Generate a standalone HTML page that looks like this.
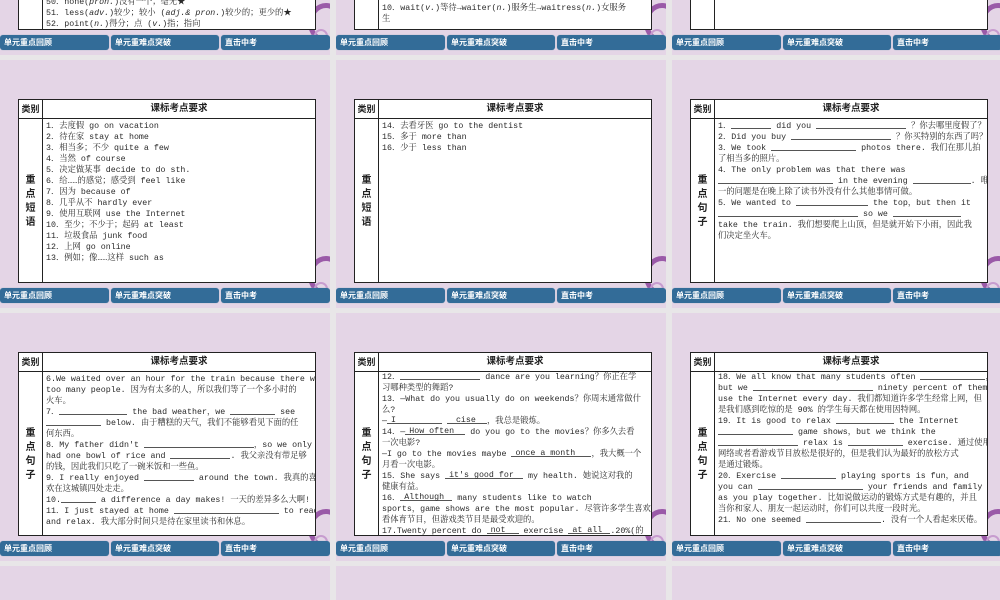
<!DOCTYPE html>
<html style="overflow:hidden;height:600px"><head><meta charset="utf-8"><style>
html,body{overflow:hidden}
body{margin:0;width:1000px;height:600px;background:#e8e6e8;position:relative;font-family:"Liberation Mono","Noto Serif CJK SC",monospace;}
.s{position:absolute;width:330px;height:248px;background:#e4d5e6;overflow:hidden}
.ring{position:absolute;right:-14px;top:196px;width:26px;height:30px;border:5px solid #9a5aa8;border-radius:50%}
.ring2{position:absolute;right:2px;top:222px;width:10px;height:10px;border:2px solid #c79ccf;border-radius:50%}
.t{position:absolute;left:18px;top:39px;width:296px;height:182px;background:#fff;border:1.3px solid #222;overflow:hidden}
.h{position:absolute;left:0;top:0;right:0;height:18px;border-bottom:1px solid #222;font:bold 9px "Liberation Sans","Noto Sans CJK SC",sans-serif;color:#222}
.h .a{position:absolute;left:0;top:0;width:23px;height:18px;line-height:18px;text-align:center;border-right:1px solid #222}
.h .b{position:absolute;left:24px;right:0;top:0;line-height:18px;text-align:center;font-size:9.5px}
.vl{position:absolute;left:23px;top:18px;bottom:0;border-left:1px solid #222}
.vc{position:absolute;left:0;width:23px;top:0;bottom:0;display:flex;flex-direction:column;justify-content:center;align-items:center;font:bold 10px/14px "Noto Sans CJK SC",sans-serif;color:#222}
.c{position:absolute;left:27px;top:21px;font-size:8.3px;line-height:11px;color:#2a2a2a;white-space:nowrap}
.c div{white-space:nowrap;height:11px}
.u{display:inline-block;border-bottom:1px solid #555;height:1px;line-height:1px;vertical-align:-1px;overflow:visible;position:relative}
.u b{position:absolute;left:4px;bottom:-2px;font-weight:normal;line-height:9px}
.nav{position:absolute;top:228px;left:0;width:330px;height:16px}
.nav div{position:absolute;top:0;height:15px;background:#336c98;border-radius:3px;color:#fff;font:bold 8px/15px "Noto Sans CJK SC",sans-serif;padding-left:4px;box-sizing:border-box;box-shadow:0 0 1px #8ab}
</style></head><body>

<!-- Row 1 -->
<div class="s" style="left:0;top:-193px"><div class="ring"></div><div class="ring2"></div>
<div class="t"><div class="vl" style="top:0"></div>
<div class="c" style="top:150px"><div>50．none(<i>pron.</i>)没有一个；毫无★</div><div>51．less(<i>adv.</i>)较少；较小 (<i>adj.&amp; pron.</i>)较少的；更少的★</div><div>52．point(<i>n.</i>)得分；点 (<i>v.</i>)指；指向</div></div></div>
<div class="nav"><div style="left:0;width:109px">单元重点回顾</div><div style="left:111px;width:108px">单元重难点突破</div><div style="left:221px;width:109px">直击中考</div></div></div>
<div class="s" style="left:336px;top:-193px"><div class="ring"></div><div class="ring2"></div>
<div class="t"><div class="vl" style="top:0"></div>
<div class="c" style="top:156px"><div>10．wait(<i>v.</i>)等待→waiter(<i>n.</i>)服务生→waitress(<i>n.</i>)女服务</div><div>生</div></div></div>
<div class="nav"><div style="left:0;width:109px">单元重点回顾</div><div style="left:111px;width:108px">单元重难点突破</div><div style="left:221px;width:109px">直击中考</div></div></div>
<div class="s" style="left:672px;top:-193px"><div class="ring"></div><div class="ring2"></div>
<div class="t"><div class="vl" style="top:0"></div></div>
<div class="nav"><div style="left:0;width:109px">单元重点回顾</div><div style="left:111px;width:108px">单元重难点突破</div><div style="left:221px;width:109px">直击中考</div></div></div>

<!-- Row 2 -->
<div class="s" style="left:0;top:60px"><div class="ring"></div><div class="ring2"></div>
<div class="t"><div class="h"><div class="a">类别</div><div class="b">课标考点要求</div></div><div class="vl"></div>
<div class="vc" style="top:18px">重<br>点<br>短<br>语</div>
<div class="c"><div>1．去度假 go on vacation</div><div>2．待在家 stay at home</div><div>3．相当多；不少 quite a few</div><div>4．当然 of course</div><div>5．决定做某事 decide to do sth.</div><div>6．给……的感觉；感受到 feel like</div><div>7．因为 because of</div><div>8．几乎从不 hardly ever</div><div>9．使用互联网 use the Internet</div><div>10．至少；不少于；起码 at least</div><div>11．垃圾食品 junk food</div><div>12．上网 go online</div><div>13．例如；像……这样 such as</div></div></div>
<div class="nav"><div style="left:0;width:109px">单元重点回顾</div><div style="left:111px;width:108px">单元重难点突破</div><div style="left:221px;width:109px">直击中考</div></div></div>

<div class="s" style="left:336px;top:60px"><div class="ring"></div><div class="ring2"></div>
<div class="t"><div class="h"><div class="a">类别</div><div class="b">课标考点要求</div></div><div class="vl"></div>
<div class="vc" style="top:18px">重<br>点<br>短<br>语</div>
<div class="c"><div>14．去看牙医 go to the dentist</div><div>15．多于 more than</div><div>16．少于 less than</div></div></div>
<div class="nav"><div style="left:0;width:109px">单元重点回顾</div><div style="left:111px;width:108px">单元重难点突破</div><div style="left:221px;width:109px">直击中考</div></div></div>

<div class="s" style="left:672px;top:60px"><div class="ring"></div><div class="ring2"></div>
<div class="t"><div class="h"><div class="a">类别</div><div class="b">课标考点要求</div></div><div class="vl"></div>
<div class="vc" style="top:18px">重<br>点<br>句<br>子</div>
<div class="c"><div>1．<span class="u" style="width:40px"></span> did you <span class="u" style="width:90px"></span> ？你去哪里度假了？</div><div>2．Did you buy <span class="u" style="width:100px"></span> ？你买特别的东西了吗？</div><div>3．We took <span class="u" style="width:85px"></span> photos there. 我们在那儿拍</div><div>了相当多的照片。</div><div>4．The only problem was that there was</div><div><span class="u" style="width:115px"></span> in the evening <span class="u" style="width:58px"></span>. 唯</div><div>一的问题是在晚上除了读书外没有什么其他事情可做。</div><div>5．We wanted to <span class="u" style="width:72px"></span> the top，but then it</div><div><span class="u" style="width:140px"></span> so we <span class="u" style="width:68px"></span></div><div>take the train. 我们想要爬上山顶，但是就开始下小雨，因此我</div><div>们决定坐火车。</div></div></div>
<div class="nav"><div style="left:0;width:109px">单元重点回顾</div><div style="left:111px;width:108px">单元重难点突破</div><div style="left:221px;width:109px">直击中考</div></div></div>

<!-- Row 3 -->
<div class="s" style="left:0;top:313px"><div class="ring"></div><div class="ring2"></div>
<div class="t"><div class="h"><div class="a">类别</div><div class="b">课标考点要求</div></div><div class="vl"></div>
<div class="vc" style="top:18px">重<br>点<br>句<br>子</div>
<div class="c"><div>6.We waited over an hour for the train because there were</div><div>too many people. 因为有太多的人，所以我们等了一个多小时的</div><div>火车。</div><div>7．<span class="u" style="width:68px"></span> the bad weather，we <span class="u" style="width:45px"></span> see</div><div><span class="u" style="width:55px"></span> below. 由于糟糕的天气，我们不能够看见下面的任</div><div>何东西。</div><div>8．My father didn't <span class="u" style="width:110px"></span>，so we only</div><div>had one bowl of rice and <span class="u" style="width:60px"></span>. 我父亲没有带足够</div><div>的钱，因此我们只吃了一碗米饭和一些鱼。</div><div>9．I really enjoyed <span class="u" style="width:50px"></span> around the town. 我真的喜</div><div>欢在这城镇四处走走。</div><div>10.<span class="u" style="width:35px"></span> a difference a day makes! 一天的差异多么大啊!</div><div>11．I just stayed at home <span class="u" style="width:105px"></span> to read</div><div>and relax. 我大部分时间只是待在家里读书和休息。</div></div></div>
<div class="nav"><div style="left:0;width:109px">单元重点回顾</div><div style="left:111px;width:108px">单元重难点突破</div><div style="left:221px;width:109px">直击中考</div></div></div>

<div class="s" style="left:336px;top:313px"><div class="ring"></div><div class="ring2"></div>
<div class="t"><div class="h"><div class="a">类别</div><div class="b">课标考点要求</div></div><div class="vl"></div>
<div class="vc" style="top:18px">重<br>点<br>句<br>子</div>
<div class="c" style="top:19px"><div>12．<span class="u" style="width:80px"></span> dance are you learning？你正在学</div><div>习哪种类型的舞蹈?</div><div>13．—What do you usually do on weekends？你周末通常做什</div><div>么?</div><div>—<span class="u" style="width:55px"><b>I</b></span> <span class="u" style="width:40px"><b>&nbsp;cise</b></span>，我总是锻炼。</div><div>14．—<span class="u" style="width:60px"><b>How often</b></span> do you go to the movies？你多久去看</div><div>一次电影?</div><div>—I go to the movies maybe <span class="u" style="width:80px"><b>once a month</b></span>，我大概一个</div><div>月看一次电影。</div><div>15．She says <span class="u" style="width:78px"><b>it's good for</b></span> my health. 她说这对我的</div><div>健康有益。</div><div>16．<span class="u" style="width:52px"><b>Although</b></span> many students like to watch</div><div>sports，game shows are the most popular. 尽管许多学生喜欢</div><div>看体育节目，但游戏类节目是最受欢迎的。</div><div>17.Twenty percent do <span class="u" style="width:32px"><b>not</b></span> exercise <span class="u" style="width:42px"><b>at all</b></span>.20%(的</div></div></div>
<div class="nav"><div style="left:0;width:109px">单元重点回顾</div><div style="left:111px;width:108px">单元重难点突破</div><div style="left:221px;width:109px">直击中考</div></div></div>

<div class="s" style="left:672px;top:313px"><div class="ring"></div><div class="ring2"></div>
<div class="t"><div class="h"><div class="a">类别</div><div class="b">课标考点要求</div></div><div class="vl"></div>
<div class="vc" style="top:18px">重<br>点<br>句<br>子</div>
<div class="c" style="top:19px"><div>18．We all know that many students often <span class="u" style="width:65px"></span>，</div><div>but we <span class="u" style="width:120px"></span> ninety percent of them</div><div>use the Internet every day. 我们都知道许多学生经常上网，但</div><div>是我们感到吃惊的是 90% 的学生每天都在使用因特网。</div><div>19．It is good to relax <span class="u" style="width:58px"></span> the Internet</div><div><span class="u" style="width:75px"></span> game shows，but we think the</div><div><span class="u" style="width:80px"></span> relax is <span class="u" style="width:55px"></span> exercise. 通过使用</div><div>网络或者看游戏节目放松是很好的，但是我们认为最好的放松方式</div><div>是通过锻炼。</div><div>20．Exercise <span class="u" style="width:55px"></span> playing sports is fun，and</div><div>you can <span class="u" style="width:105px"></span> your friends and family</div><div>as you play together. 比如说做运动的锻炼方式是有趣的，并且</div><div>当你和家人、朋友一起运动时，你们可以共度一段时光。</div><div>21．No one seemed <span class="u" style="width:75px"></span>. 没有一个人看起来厌倦。</div></div></div>
<div class="nav"><div style="left:0;width:109px">单元重点回顾</div><div style="left:111px;width:108px">单元重难点突破</div><div style="left:221px;width:109px">直击中考</div></div></div>

<!-- Row 4 -->
<div class="s" style="left:0;top:566px;height:34px"></div>
<div class="s" style="left:336px;top:566px;height:34px"></div>
<div class="s" style="left:672px;top:566px;height:34px"></div>
</body></html>
